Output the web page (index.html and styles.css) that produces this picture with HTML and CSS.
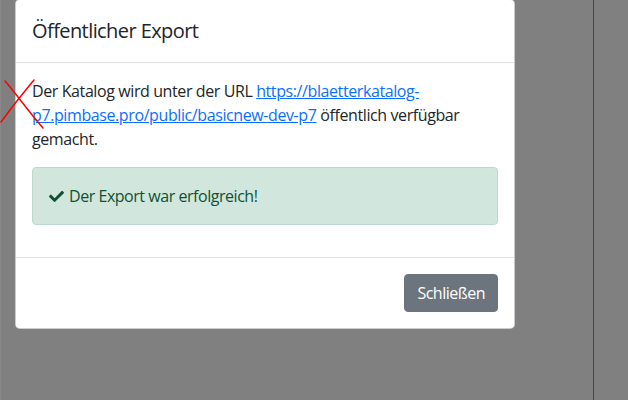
FILE: index.html
```html
<!DOCTYPE html>
<html lang="de">
<head>
<meta charset="utf-8">
<title>Öffentlicher Export</title>
<link rel="stylesheet" href="styles.css">
</head>
<body>
<div class="page">
  <div class="page-main"></div>
  <div class="page-side"></div>
</div>

<div class="modal" role="dialog" aria-labelledby="export-title">
  <div class="modal-header">
    <h5 class="modal-title" id="export-title">Öffentlicher Export</h5>
  </div>
  <div class="modal-body">
    <p class="modal-text">Der Katalog wird unter der URL <a class="link" href="#">https://blaetterkatalog-p7.pimbase.pro/public/basicnew-dev-p7</a> öffentlich verfügbar gemacht.</p>
    <div class="alert alert-success">
      <svg class="icon-check" viewBox="0 72 512 370" aria-hidden="true"><path d="M173.898 439.404l-166.4-166.4c-9.997-9.997-9.997-26.206 0-36.204l36.203-36.204c9.997-9.998 26.207-9.998 36.204 0L192 312.69 432.095 72.596c9.997-9.997 26.207-9.997 36.204 0l36.203 36.204c9.997 9.997 9.997 26.206 0 36.204l-294.4 294.401c-9.998 9.997-26.207 9.997-36.204-.001z"/></svg>
      <span>Der Export war erfolgreich!</span>
    </div>
  </div>
  <div class="modal-footer">
    <button class="btn btn-secondary" type="button">Schließen</button>
  </div>
</div>

<svg class="mark" viewBox="0 0 50 50" aria-hidden="true">
  <path d="M34 3 C24 15 12 30 1 45" />
  <path d="M5 4 C14 14 28 34 43 51" />
</svg>
</body>
</html>
```

FILE: styles.css
```css
* {
  box-sizing: border-box;
}

html, body {
  margin: 0;
  height: 100%;
}

body {
  font-family: "Open Sans", "Noto Sans", sans-serif;
  font-size: 16px;
  line-height: 1.5;
  letter-spacing: -0.4px;
  color: #212529;
  background: #808080;
  overflow: hidden;
}

/* dimmed page behind the dialog */
.page {
  display: flex;
  height: 100%;
  border-left: 1px solid #888888;
}

.page-main {
  width: 593px;
  border-right: 1px solid #474747;
}

.page-side {
  flex: 1;
}

/* dialog */
.modal {
  position: absolute;
  left: 15px;
  top: -1px;
  width: 500px;
  background: #fff;
  border: 1px solid rgba(0, 0, 0, 0.2);
  border-radius: 4.8px;
  display: flex;
  flex-direction: column;
}

.modal-header {
  padding: 16px;
  border-bottom: 1px solid #dee2e6;
}

.modal-title {
  margin: 0;
  font-size: 20px;
  font-weight: 400;
  line-height: 1.5;
  letter-spacing: -0.58px;
}

.modal-body {
  padding: 16px;
}

.modal-text {
  margin: 0 0 16px;
}

.link {
  color: #0d6efd;
  text-decoration: underline;
}

.alert {
  display: flex;
  align-items: center;
  gap: 5px;
  padding: 16px;
  margin-bottom: 16px;
  border: 1px solid transparent;
  border-radius: 4px;
  letter-spacing: -0.46px;
}

.alert-success {
  color: #0f5132;
  background: #d1e7dd;
  border-color: #badbcc;
}

.icon-check {
  width: 15px;
  height: 11px;
  fill: currentColor;
}

.modal-footer {
  display: flex;
  justify-content: flex-end;
  padding: 12px;
  border-top: 1px solid #dee2e6;
}

.btn {
  margin: 4px;
  font-family: inherit;
  font-size: 16px;
  line-height: 1.5;
  letter-spacing: -0.5px;
  padding: 6px 12px;
  border: 1px solid transparent;
  border-radius: 4px;
  cursor: pointer;
}

.btn-secondary {
  color: #fff;
  background: #6c757d;
  border-color: #6c757d;
}

/* hand-drawn cross in the left margin */
.mark {
  position: absolute;
  left: 0;
  top: 77px;
  width: 50px;
  height: 50px;
  overflow: visible;
  fill: none;
  stroke: #ff0000;
  stroke-width: 1.5;
  stroke-linecap: round;
}
```
